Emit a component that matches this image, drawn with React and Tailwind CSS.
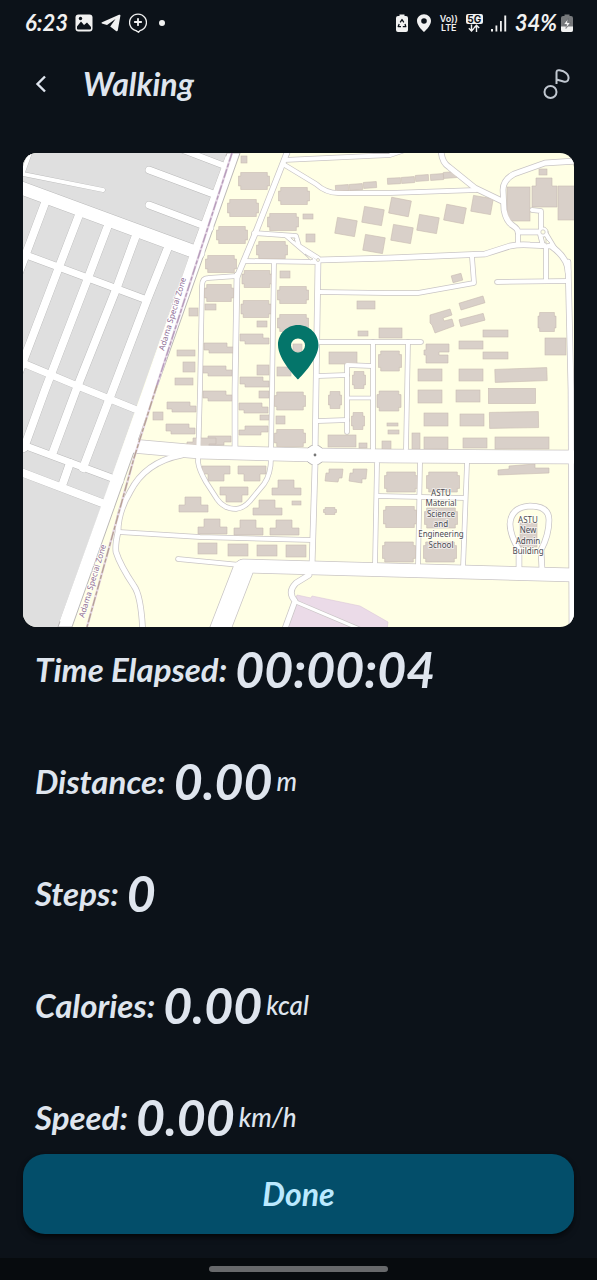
import React from "react";

const ROADS = [
  [13, "M132 446 L200 452 L315 455 L390 456 L576 457"],
  [13, "M243 566 L390 570 L576 575"],
  [20, "M243 570 L216 640"],
  [4, "M178 559 L240 565"],
  [5, "M568 262 L571 390 L572 640"],
  [5, "M237 275 L235 390 L235 449"],
  [4, "M237 276 L208 278 Q202 278 202 286 L200 390 L198 462 Q199 470 206 482 L217 499 Q224 509 236 509 Q244 508 250 501 L264 484 Q271 474 271 458"],
  [4, "M274 262 L272 390 L271 449"],
  [5, "M318 262 L316 390 L315 455 L315 466 L312 566"],
  [5, "M290 145 L255 234 L237 277"],
  [4, "M284 160 L390 155 L402 151"],
  [4, "M283 164 L316 184 Q326 193 338 193 L390 193 L476 190"],
  [5, "M441 148 Q441 162 449 167 L475 188 L502 201"],
  [5, "M576 161 L545 163 L514 174 Q503 180 503 190 L504 210 Q506 221 512 225 Q518 229 518 232 L541 232"],
  [4, "M518 232 L518 245"],
  [4, "M532 210 L541 211 L541 230"],
  [5, "M318 260 L390 258 L485 254 L510 246 Q520 244 530 245 L551 246 Q568 258 568 272"],
  [4, "M546 234 L555 249"],
  [4, "M540 234 L543 246"],
  [4, "M546 247 L546 281"],
  [4, "M497 282 L568 281"],
  [4, "M472 257 L474 283 L418 293 L385 293 L320 292"],
  [4, "M245 261 L318 262"],
  [4, "M254 233 L296 236 L299 246 L318 258"],
  [3, "M286 236 L315 261"],
  [4, "M318 342 L421 342"],
  [4, "M373 342 L373 449"],
  [4, "M318 376 L347 375"],
  [4, "M372 366 L347 365 L347 432"],
  [3, "M347 398 L372 398"],
  [4, "M318 421 L347 420"],
  [4, "M408 342 L406 449"],
  [4, "M377 463 L375 565"],
  [4, "M420 463 L418 566"],
  [4, "M467 463 L463 568"],
  [4, "M378 496 L465 498"],
  [5, "M519 570 L519 550 Q510 535 510 524 Q511 507 530 506 Q549 506 549 520 Q549 535 541 550 L542 570"],
  [5, "M182 455 Q145 462 130 492 Q118 512 118 532 Q115 545 116 552 Q120 565 134 586 Q142 597 143 640"],
  [4, "M119 532 L200 537 L312 540"],
  [5, "M309 575 L296 583 Q287 592 295 601 L283 634"],
  [3, "M296 602 L362 630"],
];

const BLOCK_ROADS = [
  [13, "M16 186 L198 253"],
  [4, "M18 173 L103 190"],
  [4, "M23 172 L31 150"],
  [7, "M149 170 L216 195"],
  [7, "M149 205 L210 228"],
  [6, "M183 150 L230 168"],
  [8, "M45 203 L18 275"],
  [8, "M79 215 L59 267 L16 380"],
  [8, "M107 228 L88 278 L45 390 L24 448"],
  [8, "M135 238 L117 287 L78 385 L53 452"],
  [8, "M167 250 L147 300 L112 392 L83 468"],
  [8, "M70 463 L63 483"],
  [7, "M18 252 L147 300"],
  [7, "M18 361 L80 387 L142 412"],
  [7, "M18 443 L120 481"],
  [8, "M18 471 L110 506"],
];

const NOTCHED = [
  [254, 181, 31, 17], [243, 208, 31, 17], [232, 235, 31, 17], [221, 264, 31, 17],
  [219, 293, 29, 17], [294, 196, 31, 17], [283, 222, 31, 17], [272, 250, 31, 17],
  [257, 279, 30, 17], [256, 309, 30, 17], [293, 295, 31, 17], [293, 323, 31, 17],
  [290, 401, 31, 18], [290, 438, 31, 17], [401, 482, 33, 20], [443, 482, 33, 20],
  [400, 517, 33, 21], [441, 518, 33, 20], [399, 552, 33, 20], [440, 552, 33, 20],
  [547, 322, 18, 19], [390, 361, 23, 20], [389, 401, 24, 20], [359, 380, 13, 17],
  [335, 400, 13, 17], [358, 421, 13, 17], [330, 511, 13, 7], 
];

const RECTS = [
  [241, 156, 6, 7], [303, 214, 10, 5], [306, 234, 9, 8], [280, 271, 10, 7], [257, 321, 10, 6],
  [205, 304, 11, 6], [357, 301, 18, 8], [358, 331, 10, 5], [257, 365, 12, 10], [277, 367, 14, 9],
  [293, 344, 9, 8], [329, 352, 28, 12], [379, 328, 23, 10], [189, 308, 9, 8], [177, 350, 18, 6],
  [183, 362, 12, 10], [175, 378, 18, 7], [153, 412, 10, 8], [198, 543, 19, 11], [259, 391, 10, 7],
  [260, 415, 9, 5], [276, 416, 9, 8], [328, 435, 28, 12], [359, 443, 8, 5], [382, 441, 9, 8],
  [387, 423, 11, 3], [388, 430, 11, 4], [292, 501, 9, 4], [228, 544, 20, 12], [257, 545, 20, 11],
  [286, 545, 20, 12], [418, 390, 24, 13], [456, 390, 24, 12], [424, 413, 24, 13], [460, 414, 24, 12],
  [412, 433, 8, 16], [424, 437, 24, 12], [463, 438, 24, 10], [520, 523, 17, 24], [507, 187, 23, 34],
  [558, 186, 18, 34], [539, 169, 8, 6], [483, 330, 25, 7], [459, 341, 24, 8], [483, 352, 25, 7],
  [418, 369, 24, 12], [459, 369, 24, 12], [545, 338, 21, 17],
];

const TILTED = [
  [346, 227, 20, 16, 10], [373, 216, 20, 16, 10], [374, 244, 20, 16, 10], [400, 207, 20, 16, 11],
  [402, 234, 20, 16, 10], [428, 224, 20, 16, 10], [455, 214, 20, 16, 11], [482, 205, 20, 16, 10],
  [457, 278, 10, 7, -15], [472, 303, 25, 7, -17], [472, 320, 25, 7, -15],
  [342, 188, 13, 6, -4], [356, 187, 13, 6, -4], [370, 185, 13, 6, -4], [394, 181, 13, 6, -3],
  [408, 180, 13, 6, -4], [422, 178, 13, 6, -4], [437, 177, 13, 6, -4], [450, 175, 13, 6, -4],
  [521, 375, 52, 13, -2], [512, 396, 47, 15, 0], [514, 420, 49, 16, -1], [522, 443, 54, 12, 0],
];

const STEPPED = [
  [204, 343], [203, 366], [240, 334], [240, 377], [167, 402], [166, 424],
  [203, 391], [239, 403],
];
const STEPPED_UP = [[202, 436], [239, 426], [187, 438]];
const TEES = [[202, 466], [238, 466], [220, 487]];
const INVERTED_TEES = [[179, 497], [272, 480], [253, 500], [198, 519], [234, 520], [270, 520]];

const notchedPath = (cx, cy, w, h) => {
  const l = cx - w / 2, r = cx + w / 2, t = cy - h / 2, b = cy + h / 2;
  const n = w < 20 ? 1.6 : 2.2, v = h < 10 ? 2 : 3.6;
  return `M${l + n} ${t}H${r - n}V${t + v}H${r}V${b - v}H${r - n}V${b}H${l + n}V${b - v}H${l}V${t + v}H${l + n}Z`;
};

function MapLabel({ x, y, lines }) {
  return (
    <text textAnchor="middle" className="fill-[#4b4b52] stroke-[#ffffff99] stroke-2 font-['Noto_Sans',sans-serif] text-[8px] [paint-order:stroke]">
      {lines.map((line, i) => (
        <tspan key={line} x={x} y={y + Math.round(i * 10.3)}>{line}</tspan>
      ))}
    </text>
  );
}

function RouteMap() {
  return (
    <svg viewBox="23 153 551 474" className="block h-auto w-full rounded-[14px]" role="img" aria-label="Map">
      <rect x="23" y="153" width="551" height="474" fill="#ffffe5" />
      <path d="M297 595 L311 598 L312 596 L360 606 L388 622 L387 630 L285 630Z" fill="#ebdbe8" stroke="#dcc8d8" strokeWidth="0.6" />
      <path d="M20 150 H228 L193 246 L58 630 H20Z" fill="#dfdfdf" />
      <g fill="none" stroke="#b9b9b9" strokeLinecap="round" strokeLinejoin="round">
        {BLOCK_ROADS.map(([w, d]) => <path key={d} d={d} strokeWidth={w + 0.8} />)}
      </g>
      <g fill="none" stroke="#c9c5c5" strokeLinecap="round" strokeLinejoin="round">
        {ROADS.map(([w, d]) => <path key={d} d={d} strokeWidth={w + 1.5} />)}
        <circle cx="315" cy="455" r="10" fill="#fff" stroke="#b5b2b2" />
        <circle cx="543" cy="232" r="5" />
      </g>
      <path d="M227 153 L240 153 L72 627 L58 627 L145 388 L193 246Z" fill="#fff" stroke="#b3b0b0" strokeWidth="0.9" />
      <g fill="#d9d0c9" stroke="#c8bbb2" strokeWidth="0.6">
        {NOTCHED.map(([x, y, w, h]) => <path key={`${x}-${y}`} d={notchedPath(x, y, w, h)} />)}
        {RECTS.map(([x, y, w, h]) => <rect key={`${x}-${y}`} x={x} y={y} width={w} height={h} />)}
        {TILTED.map(([x, y, w, h, a]) => (
          <rect key={`${x}-${y}`} x={x - w / 2} y={y - h / 2} width={w} height={h} transform={`rotate(${a} ${x} ${y})`} />
        ))}
        {STEPPED.map(([x, y]) => <path key={`${x}-${y}`} d={`M${x} ${y}H${x + 23}V${y + 4}H${x + 29}V${y + 10}H${x + 5}V${y + 7}H${x}Z`} />)}
        {STEPPED_UP.map(([x, y]) => <path key={`${x}-${y}`} d={`M${x + 6} ${y}H${x + 29}V${y + 6}H${x + 22}V${y + 9}H${x}V${y + 4}H${x + 6}Z`} />)}
        {TEES.map(([x, y]) => <path key={`${x}-${y}`} d={`M${x} ${y}H${x + 28}V${y + 8}H${x + 22}V${y + 15}H${x + 6}V${y + 8}H${x}Z`} />)}
        {INVERTED_TEES.map(([x, y]) => <path key={`${x}-${y}`} d={`M${x + 6} ${y}H${x + 22}V${y + 8}H${x + 29}V${y + 15}H${x}V${y + 8}H${x + 6}Z`} />)}
        <path d="M536 178H552V186H557V207H532V186H536Z" />
        <path d="M426 344H449V352H439V355H448V363H426V355H424V350H426Z" />
        <path d="M430 315 L450 309 L452 315 L443 318 L444 321 L452 319 L454 326 L435 333 L432 325 L430 323Z" />
        <path d="M498 470 L509 469 V466 L535 464 V468 H549 V473 L498 475Z" />
        <path d="M329 469 L343 469 L342 478 L339 478 L338 482 L325 481 L326 473 L329 473Z" />
        <path d="M353 469 L367 469 L366 479 L362 479 L362 483 L349 481 L350 473 L353 473Z" />
      </g>
      <g fill="none" stroke="#fff" strokeLinecap="round" strokeLinejoin="round">
        {BLOCK_ROADS.map(([w, d]) => <path key={d} d={d} strokeWidth={w} />)}
        {ROADS.map(([w, d]) => <path key={d} d={d} strokeWidth={w} />)}
      </g>
      <path d="M228 157 L194 250 L147 386 L62 622" fill="none" stroke="#fff" strokeWidth="5" />
      <circle cx="315" cy="455" r="9" fill="#fff" />
      <circle cx="315" cy="455" r="1.4" fill="#777" />
      <circle cx="543" cy="232" r="4.5" fill="#fff" />
      <g fill="#ffffe5" stroke="#c9c5c5" strokeWidth="0.8">
        <circle cx="543" cy="232" r="2.2" />
        <circle cx="318" cy="260" r="1.5" />
        <path d="M546 239 L550 243 L546 244Z" />
        <path d="M305 254 L313 259 L310 260Z" />
        <path d="M291 238 L295 238 L294 241Z" />
      </g>
      <path d="M232 153 L157 385 L134 458 L87 627" fill="none" stroke="#e6d8e6" strokeWidth="2.4" />
      <path d="M232 153 L157 385" fill="none" stroke="#b79dbb" strokeWidth="1.4" strokeDasharray="9 2 4 2" />
      <path d="M157 385 L134 458 L87 627" fill="none" stroke="#b7a294" strokeWidth="1.4" strokeDasharray="9 2 4 2" />
      <g className="fill-[#8d6b93] stroke-[#ffffffaa] stroke-2 font-['Noto_Sans',sans-serif] text-[8px] [paint-order:stroke]">
        <text transform="translate(164 351) rotate(-73)">Adama Special Zone</text>
        <text transform="translate(84 618) rotate(-73)">Adama Special Zone</text>
      </g>
      <MapLabel x={441} y={496} lines={["ASTU", "Material", "Science", "and", "Engineering", "School"]} />
      <MapLabel x={528} y={523} lines={["ASTU", "New", "Admin", "Building"]} />
      <path
        d="M298 325C286.700 325 278 334 278 345C278 360 298 379.500 298 379.500S318.500 360 318.500 345C318.500 334 309.500 325 298 325ZM298 338.500A7 7 0 1 1 298 352.500A7 7 0 1 1 298 338.500Z"
        fill="#04756a"
        fillRule="evenodd"
      />
    </svg>
  );
}

function StatusBar() {
  return (
    <div className="flex h-[46px] items-center justify-between pl-[25px] pr-6 text-[#f1f1f1]">
      <div className="flex items-center gap-2">
        <span className="w-[42px] text-[22px] font-bold italic leading-none">6:23</span>
        <svg width="18" height="18" viewBox="0 0 18 18" aria-hidden="true">
          <rect x="0.500" y="0.500" width="17" height="17" rx="3" fill="currentColor" />
          <path d="M2 12.500 L6 7.500 L9 11 L12 8.500 L16 13 V14.500 Q16 15.500 15 15.500 H3 Q2 15.500 2 14.500Z" fill="#0c1219" />
          <circle cx="5.500" cy="4.500" r="1.700" fill="#0c1219" />
        </svg>
        <svg width="20" height="18" viewBox="0 0 20 18" fill="currentColor" aria-hidden="true">
          <path d="M0.500 8.500 L18 0.800 Q19.700 0.200 19.400 1.800 L16.800 16.300 Q16.400 17.800 15 17 L9.200 12.500 L14.500 5 L6 11 L0.800 9.500Z" />
        </svg>
        <svg width="18" height="20" viewBox="0 0 18 20" fill="none" stroke="currentColor" aria-hidden="true">
          <path d="M7 17.600 A8.400 8.400 0 1 1 11 17.600 L9.500 19.300Z" strokeWidth="1.300" strokeLinejoin="round" />
          <path d="M9 5.800V12.200M5.800 9H12.200" strokeWidth="1.800" strokeLinecap="round" />
        </svg>
        <span className="ml-1 size-1.5 rounded-full bg-current" />
      </div>
      <div className="flex items-center gap-2">
        <svg width="12" height="18" viewBox="0 0 12 18" aria-hidden="true">
          <path d="M3.500 0.500H8.500V2H10Q12 2 12 4V16Q12 18 10 18H2Q0 18 0 16V4Q0 2 2 2H3.500Z" fill="currentColor" />
          <path d="M4.200 8.300L6 5.500L7.800 8.300M9 10L9.800 12.600H6.800M5 12.600H2.200L3.200 10" fill="none" stroke="#0c1219" strokeWidth="1.300" strokeLinejoin="round" />
        </svg>
        <svg width="16" height="18" viewBox="0 0 16 18" aria-hidden="true">
          <path fillRule="evenodd" fill="currentColor" d="M8 0.300C4 0.300 1 3.300 1 7C1 12 8 18 8 18S15 12 15 7C15 3.300 12 0.300 8 0.300ZM8 4.200A2.800 2.800 0 1 1 8 9.800A2.800 2.800 0 1 1 8 4.200Z" />
        </svg>
        <span className="flex w-[18px] flex-col text-center font-['Inter',sans-serif] text-[9px] font-semibold leading-[9px]">
          <span>Vo))</span>
          <span>LTE</span>
        </span>
        <span className="flex w-[17px] flex-col items-center">
          <span className="w-full rounded-xs bg-current text-center leading-[10px]">
            <span className="block font-['Inter',sans-serif] text-[10px] font-bold text-[#0c1219]">5G</span>
          </span>
          <svg width="12" height="8" viewBox="0 0 12 8" fill="none" stroke="currentColor" strokeWidth="1.400" aria-hidden="true">
            <path d="M3.500 0.500V7M0.800 4.300L3.500 7L6 4.300M8.500 8V1.500M6 4L8.500 1.300L11.200 4" />
          </svg>
        </span>
        <svg width="16" height="17" viewBox="0 0 16 17" fill="currentColor" aria-hidden="true">
          <path d="M0 14H2V16.500H0ZM4.500 10.500H6.300V16.500H4.500ZM9 6H10.800V16.500H9ZM13.300 0.500H15.200V16.500H13.300Z" />
        </svg>
        <div className="flex items-center gap-1">
          <span className="text-[22px] font-bold italic leading-none">34%</span>
          <svg width="12" height="18" viewBox="0 0 12 18" aria-hidden="true">
            <path d="M3.500 0.500H8.500V2H10Q12 2 12 4V16Q12 18 10 18H2Q0 18 0 16V4Q0 2 2 2H3.500Z" fill="#77797c" />
            <path d="M0 12.500H12V16Q12 18 10 18H2Q0 18 0 16Z" fill="currentColor" />
            <path d="M7 4.500L2.500 10.500H5.500L5 14.500L9.500 8.500H6.500Z" fill="#f1f1f1" stroke="#55585c" strokeWidth="0.600" />
          </svg>
        </div>
      </div>
    </div>
  );
}

const STATS = [
  { label: "Time Elapsed:", value: "00:00:04" },
  { label: "Distance:", value: "0.00", unit: "m" },
  { label: "Steps:", value: "0" },
  { label: "Calories:", value: "0.00", unit: "kcal" },
  { label: "Speed:", value: "0.00", unit: "km/h" },
];

export default function App() {
  return (
    <div className="flex min-h-screen flex-col bg-[#0c1219] font-['Lato',sans-serif] text-[#dfe5ee]">
      <StatusBar />
      <header className="flex h-[76px] items-center px-[23px]">
        <button type="button" aria-label="Back" className="flex size-9 items-center justify-center">
          <svg width="12" height="18" viewBox="0 0 12 18" fill="none" stroke="currentColor" strokeWidth="2.400" aria-hidden="true">
            <path d="M10 1.500L2.500 9L10 16.500" />
          </svg>
        </button>
        <h1 className="ml-6 text-[32px] font-bold italic leading-none">Walking</h1>
        <button type="button" aria-label="Music" className="ml-auto pr-1">
          <svg width="28" height="32" viewBox="0 0 28 32" fill="none" stroke="#c0c7d0" strokeWidth="2" aria-hidden="true">
            <circle cx="8.500" cy="24" r="6" />
            <path d="M14.500 16V4.500Q14.500 1.500 17.500 2.300L21.500 3.300Q27 6 26.500 10.500Q26 14.500 21.500 13.500L14.500 11.500" strokeLinejoin="round" />
          </svg>
        </button>
      </header>
      <main className="flex flex-1 flex-col px-[23px] pt-[31px]">
        <RouteMap />
        <dl className="mt-[14px] flex flex-col gap-14 pl-3">
          {STATS.map(({ label, value, unit }) => (
            <div key={label} className="flex h-14 items-center">
              <dt className="text-[33px] font-bold italic leading-none">{label}</dt>
              <dd className="ml-2 flex items-center gap-1 leading-none">
                <span className="text-[50px] font-bold italic leading-none">{value}</span>
                {unit && <span className="text-[26px] font-medium italic leading-none">{unit}</span>}
              </dd>
            </div>
          ))}
        </dl>
        <button type="button" className="mt-[9px] h-20 w-full rounded-[22px] bg-[#034e6a] text-[32px] font-bold italic text-[#bbe9ff] shadow-md shadow-black/50">
          Done
        </button>
      </main>
      <footer className="mt-6 flex h-[22px] items-center justify-center bg-[#070b0e]">
        <span className="h-1.5 w-[30%] rounded-full bg-[#67696b]" />
      </footer>
    </div>
  );
}
